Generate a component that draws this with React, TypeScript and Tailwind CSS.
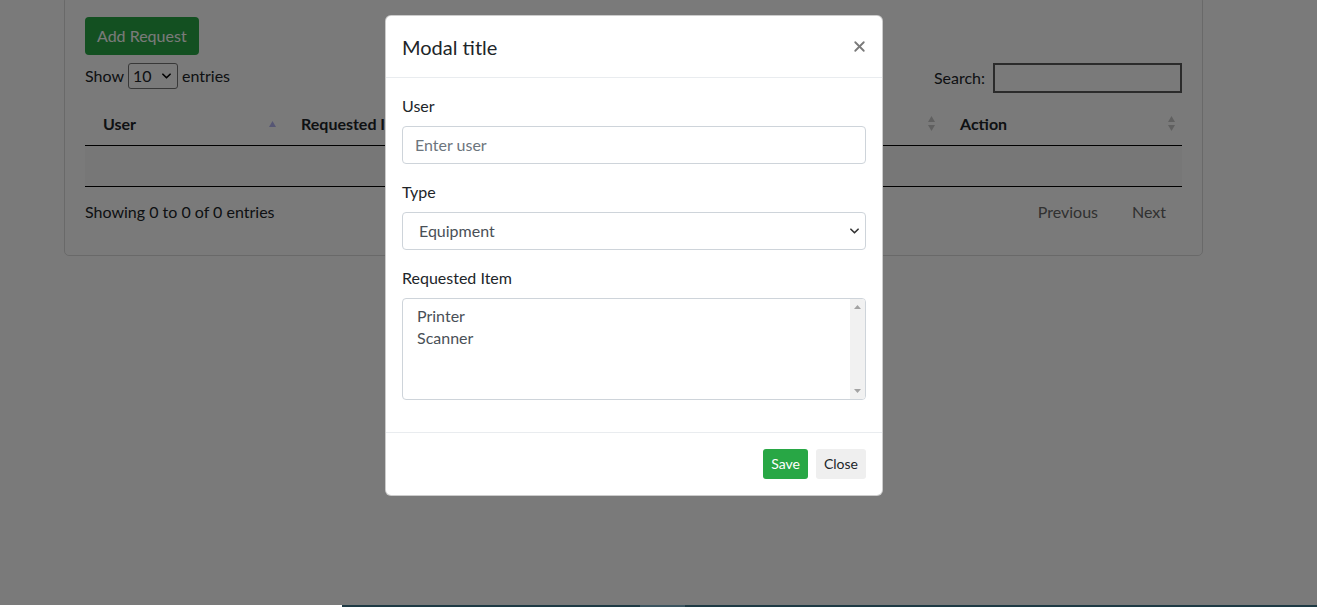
import { X } from 'lucide-react';

const FONT = { fontFamily: '"Segoe UI", Lato, "Noto Sans", sans-serif' };

function Chevron({ className = '' }: { className?: string }) {
  return (
    <svg viewBox="0 0 10 6" className={className} fill="none" stroke="currentColor" strokeWidth="1.8" strokeLinecap="round" strokeLinejoin="round">
      <path d="M1 1l4 4 4-4" />
    </svg>
  );
}

function SortIcon({ dir }: { dir?: 'asc' }) {
  if (dir === 'asc') {
    return (
      <svg width="9" height="8" viewBox="0 0 9 8"><path d="M4.5 1L8 7H1z" fill="#b4b4f2" /></svg>
    );
  }
  return (
    <svg width="9" height="17" viewBox="0 0 9 17">
      <path d="M4.5 1L8 7H1z" fill="#c8c8c8" />
      <path d="M4.5 16L8 10H1z" fill="#c8c8c8" />
    </svg>
  );
}

const columns = [
  { label: 'User', w: 'w-[198px]', dir: 'asc' as const },
  { label: 'Requested Item', w: 'w-[220px]' },
  { label: 'Type', w: 'w-[220px]' },
  { label: 'Date', w: 'w-[219px]' },
  { label: 'Action', w: 'flex-1' },
];

function Page() {
  return (
    <div className="pl-[64px] w-[1203px]">
      <div className="-mt-1 border border-[#dcdcdc] rounded-[5px] p-5 pb-[23px] text-[#212529]">
        <button className="bg-[#28a745] text-white text-base px-3 h-[38px] rounded-[4px]">Add Request</button>
        <div className="flex justify-between mt-2">
          <div className="flex items-center gap-1 h-[26px] text-base">
            <span>Show</span>
            <div className="w-[50px] h-[26px] border border-[#767676] rounded-[3px] flex items-center justify-between pl-1 pr-1.5">
              <span>10</span>
              <Chevron className="w-[9px] h-[6px] text-black" />
            </div>
            <span>entries</span>
          </div>
          <div className="flex items-center gap-2 text-base">
            <span>Search:</span>
            <div className="w-[189px] h-[30px] border-2 border-[#5a5a5a] bg-white" />
          </div>
        </div>
        <div className="mt-[9px]">
          <div className="flex border-b border-black h-[44px] items-center">
            {columns.map(c => (
              <div key={c.label} className={`${c.w} flex items-center justify-between pl-[18px] pr-[6px] font-bold text-base text-[#212529]`}>
                <span>{c.label}</span>
                <SortIcon dir={c.dir} />
              </div>
            ))}
          </div>
          <div className="h-[41px] bg-[#f9f9f9] border-b border-black" />
        </div>
        <div className="flex justify-between items-center mt-[5px] h-[40px] text-base">
          <span>Showing 0 to 0 of 0 entries</span>
          <div className="flex text-[#666]">
            <span className="px-4 py-2">Previous</span>
            <span className="px-4 py-2 ml-[2px]">Next</span>
          </div>
        </div>
      </div>
    </div>
  );
}

function Modal() {
  return (
    <div className="w-[498px] bg-white rounded-[6px] border border-black/20 text-[#212529]">
      <div className="flex items-center justify-between px-4 h-[62px] border-b border-[#e9ecef]">
        <h5 className="text-[20px] leading-[30px] font-normal">Modal title</h5>
        <X size={17} strokeWidth={2.6} className="text-[#7a7a7a] -mr-[2px]" />
      </div>
      <div className="p-4">
        <div className="mb-4">
          <label className="block mb-2 text-base leading-6">User</label>
          <div className="h-[38px] border border-[#ced4da] rounded-[4px] flex items-center px-3 text-base text-[#6c757d]">Enter user</div>
        </div>
        <div className="mb-4">
          <label className="block mb-2 text-base leading-6">Type</label>
          <div className="h-[38px] border border-[#ced4da] rounded-[4px] flex items-center justify-between pl-4 pr-[6px] text-base text-[#495057]">
            <span>Equipment</span>
            <Chevron className="w-[9px] h-[6px] text-[#333]" />
          </div>
        </div>
        <div className="mb-4">
          <label className="block mb-2 text-base leading-6">Requested Item</label>
          <div className="h-[102px] border border-[#ced4da] rounded-[4px] flex overflow-hidden">
            <div className="flex-1 pl-[14px] pt-[6px] text-base leading-[22px] text-[#495057]">
              <div>Printer</div>
              <div>Scanner</div>
            </div>
            <div className="w-[15px] bg-[#f1f1f1] flex flex-col items-center justify-between py-[6px]">
              <svg width="7" height="4" viewBox="0 0 7 4"><path d="M3.5 0L7 4H0z" fill="#a3a3a3" /></svg>
              <svg width="7" height="4" viewBox="0 0 7 4"><path d="M3.5 4L7 0H0z" fill="#a3a3a3" /></svg>
            </div>
          </div>
        </div>
      </div>
      <div className="border-t border-[#e9ecef] flex justify-end gap-2 px-4 h-[63px] items-center">
        <button className="bg-[#28a745] text-white text-sm h-[30px] px-2 rounded-[3px]">Save</button>
        <button className="bg-[#efefef] text-[#212529] text-sm h-[30px] px-2 rounded-[3px]">Close</button>
      </div>
    </div>
  );
}

export default function App() {
  return (
    <div className="w-[1317px] h-[607px] overflow-hidden bg-white flex flex-col" style={FONT}>
      <div className="relative h-[605px] overflow-hidden">
        <Page />
        <div className="absolute inset-0 bg-black/[0.52] pl-[385px] pt-[15px]">
          <Modal />
        </div>
      </div>
      <div className="h-[2px] flex">
        <div className="w-[342px] bg-white" />
        <div className="w-[298px] bg-[#1e3a44]" />
        <div className="w-[45px] bg-[#3c5560]" />
        <div className="flex-1 bg-[#1e3a44]" />
      </div>
    </div>
  );
}
